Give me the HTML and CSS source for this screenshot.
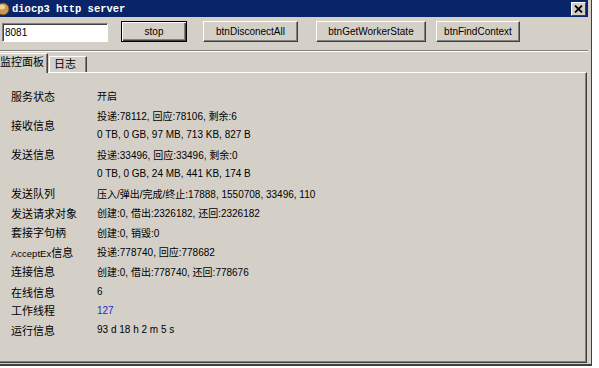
FILE: index.html
```html
<!DOCTYPE html>
<html lang="zh">

<head>
  <meta charset="UTF-8" />
  <title>diocp3 http server</title>
  <link rel="stylesheet" href="styles.css">
</head>

<body>
  <div class="window">
    <div class="titlebar">
      <svg class="app-icon" width="11" height="14" viewBox="0 0 11 14">
        <ellipse cx="4" cy="7" rx="6" ry="6" fill="#c89a52" stroke="#6a4a20" stroke-width="1" />
        <ellipse cx="3" cy="5" rx="3" ry="2.5" fill="#ecd39a" />
      </svg>
      <span class="title">diocp3 http server</span>
      <span class="close">
        <svg width="9" height="8" viewBox="0 0 9 8">
          <path d="M1 0.5 L8 7.5 M8 0.5 L1 7.5" stroke="#000" stroke-width="1.8" />
        </svg>
      </span>
    </div>

    <div class="toolbar">
      <div class="edit">8081</div>
      <div class="btn default btn-stop">stop</div>
      <div class="btn btn-disc">btnDisconectAll</div>
      <div class="btn btn-state">btnGetWorkerState</div>
      <div class="btn btn-find">btnFindContext</div>
    </div>

    <div class="tabs">
      <div class="tab active">监控面板</div>
      <div class="tab">日志</div>
    </div>

    <div class="page">
      <div class="grid">
        <div class="lbl">服务状态</div>
        <div class="val">开启</div>

        <div class="lbl span2">接收信息</div>
        <div class="val">投递:78112, 回应:78106, 剩余:6</div>
        <div class="val">0 TB, 0 GB, 97 MB, 713 KB, 827 B</div>

        <div class="lbl">发送信息</div>
        <div class="val">投递:33496, 回应:33496, 剩余:0</div>
        <div class="lbl"></div>
        <div class="val">0 TB, 0 GB, 24 MB, 441 KB, 174 B</div>

        <div class="lbl">发送队列</div>
        <div class="val">压入/弹出/完成/终止:17888, 1550708, 33496, 110</div>

        <div class="lbl">发送请求对象</div>
        <div class="val">创建:0, 借出:2326182, 还回:2326182</div>

        <div class="lbl">套接字句柄</div>
        <div class="val">创建:0, 销毁:0</div>

        <div class="lbl"><span class="latin">AcceptEx</span>信息</div>
        <div class="val">投递:778740, 回应:778682</div>

        <div class="lbl">连接信息</div>
        <div class="val">创建:0, 借出:778740, 还回:778676</div>

        <div class="lbl gap">在线信息</div>
        <div class="val gap">6</div>

        <div class="lbl">工作线程</div>
        <div class="val link">127</div>

        <div class="lbl">运行信息</div>
        <div class="val">93 d 18 h 2 m 5 s</div>
      </div>
    </div>
  </div>
</body>

</html>
```

FILE: styles.css
```css
body {
  margin: 0;
  background: #fff;
  font-family: "Liberation Sans", "Noto Sans CJK SC", sans-serif;
  font-size: 10px;
  color: #000;
}

.window {
  width: 592px;
  height: 366px;
  box-sizing: border-box;
  background: #d4d0c8;
  border-right: 1px solid #404040;
  border-bottom: 2px solid #404040;
  padding-right: 3px;
  display: flex;
  flex-direction: column;
}

/* title bar */
.titlebar {
  height: 17px;
  flex: none;
  background: #0a246a;
  display: flex;
  align-items: center;
  color: #fff;
}

.app-icon {
  margin-left: -1px;
}

.title {
  font: bold 10.5px "Liberation Mono", monospace;
  margin-left: 2px;
}

.close {
  margin-left: auto;
  margin-right: 2px;
  width: 15px;
  height: 14px;
  box-sizing: border-box;
  background: #d4d0c8;
  border: 1px solid;
  border-color: #fff #404040 #404040 #fff;
  display: flex;
  align-items: center;
  justify-content: center;
}

/* toolbar */
.toolbar {
  height: 34px;
  flex: none;
  box-sizing: border-box;
  display: flex;
  align-items: flex-end;
  padding: 0 0 8px 2px;
  border-bottom: 1px solid #808080;
  box-shadow: 0 1px #fff;
}

.edit {
  width: 106px;
  height: 19px;
  box-sizing: border-box;
  background: #fff;
  border: 1px solid;
  border-color: #808080 #fff #fff #808080;
  box-shadow: inset 1px 1px #404040;
  padding: 3px 0 0 2px;
  font-size: 10px;
}

.btn {
  height: 21px;
  box-sizing: border-box;
  border: 1px solid;
  border-color: #fff #404040 #404040 #fff;
  box-shadow: inset -1px -1px #808080;
  display: flex;
  align-items: center;
  justify-content: center;
}

.btn.default {
  border-color: #000;
  box-shadow: inset 1px 1px #fff, inset -1px -1px #404040, inset -2px -2px #808080;
}

.btn-stop {
  width: 66px;
  margin-left: 13px;
}

.btn-disc {
  width: 95px;
  margin-left: 16px;
}

.btn-state {
  width: 110px;
  margin-left: 18px;
}

.btn-find {
  width: 84px;
  margin-left: 10px;
}

/* tabs */
.tabs {
  height: 20px;
  flex: none;
  margin-top: 1px;
  display: flex;
  align-items: flex-end;
  font-size: 11px;
}

.tab {
  height: 15px;
  padding: 0 10px 0 4px;
  border-left: 1px solid #fff;
  border-top: 1px solid #fff;
  border-right: 1px solid #404040;
  box-shadow: inset -1px 0 #808080;
  margin-left: 1px;
  line-height: 15px;
}

.tab.active {
  height: 19px;
  padding: 0 3px 0 0;
  margin-left: 0;
  border-left: none;
  line-height: 17px;
  margin-bottom: -1px;
  position: relative;
  background: #d4d0c8;
}

/* tab page */
.page {
  flex: 1;
  margin-bottom: 1px;
  border-top: 1px solid #fff;
  border-right: 1px solid #404040;
  border-bottom: 1px solid #404040;
  box-shadow: inset -1px -1px #808080;
  margin-right: 1px;
}

.grid {
  display: grid;
  grid-template-columns: 86px auto;
  grid-auto-rows: 19.5px;
  align-items: center;
  padding: 13px 0 0 11px;
}

.lbl {
  font-size: 11px;
}

.lbl .latin {
  font-size: 9.5px;
}

.span2 {
  grid-row: span 2;
}

.gap {
  padding-top: 2px;
}

.link {
  color: #2424d0;
}
```
